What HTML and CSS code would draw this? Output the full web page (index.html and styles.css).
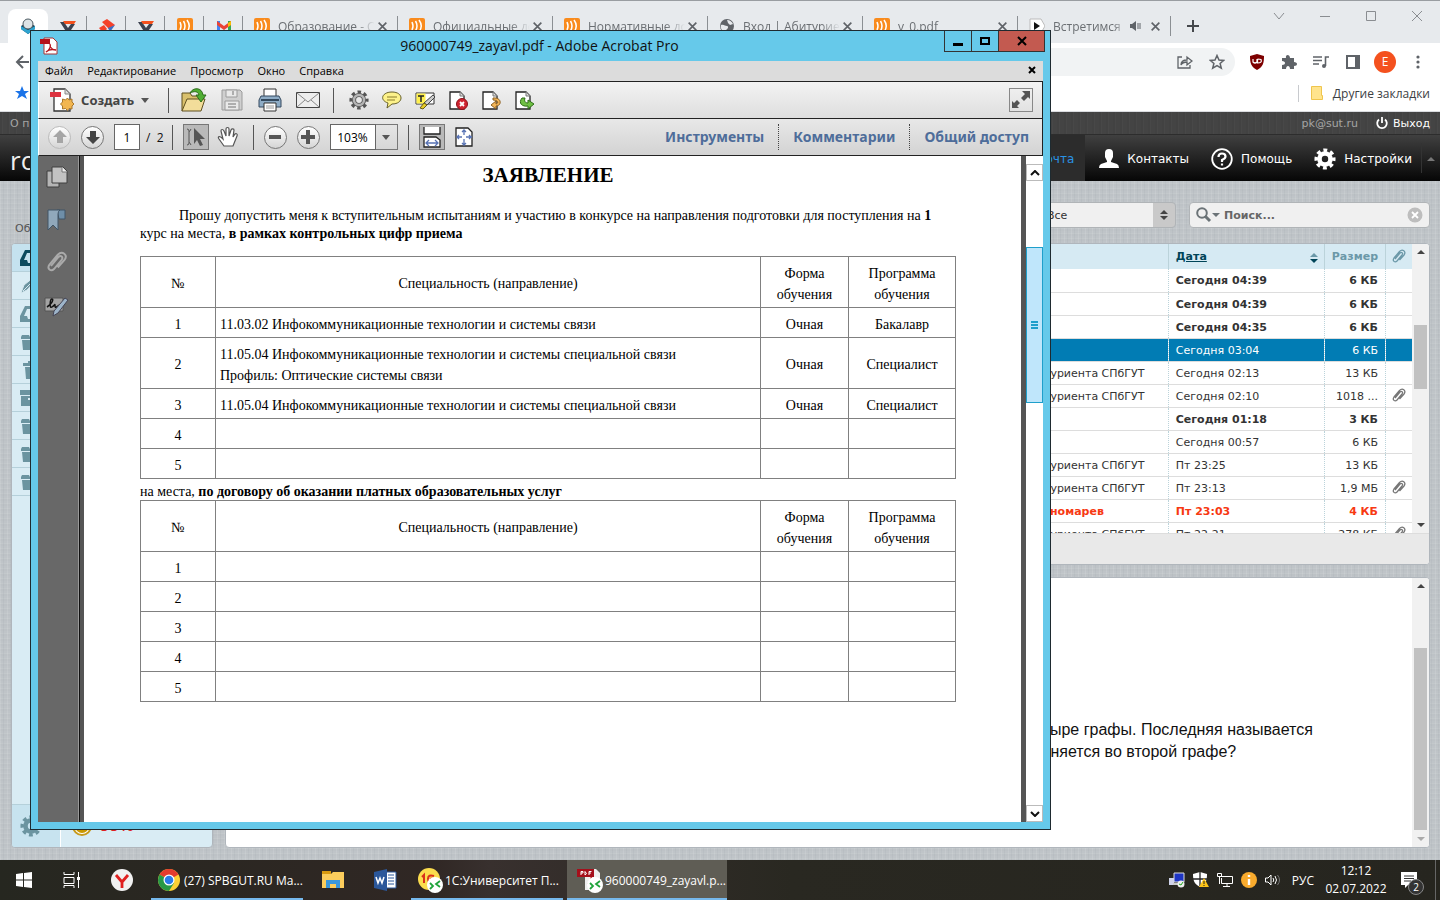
FILE: index.html
```
<!DOCTYPE html>
<html lang="ru">

<head>
    <meta charset="UTF-8">
    <meta name="viewport" content="width=device-width, initial-scale=1.0">
    <title>960000749_zayavl.pdf - Adobe Acrobat Pro</title>
    <link rel="stylesheet" href="styles.css">
</head>

<body>
    <!-- shared icons -->
    <svg class="sprite" aria-hidden="true">
        <symbol id="i-feed" viewBox="0 0 16 16">
            <rect width="16" height="16" rx="2" fill="#f98b1d" />
            <path d="M3 4q2 4 0 8M6.500 3q3 5 0 10M10 2q4.500 6 0 12" fill="none" stroke="#fff" stroke-width="1.500" />
        </symbol>
        <symbol id="i-vv" viewBox="0 0 16 16">
            <path d="M0 4h4l4 6 3-4h4l-6 9H7z" fill="#3c4250" />
            <path d="M3 3h13l-2 3H5z" fill="#f4511e" />
        </symbol>
        <symbol id="i-close" viewBox="0 0 10 10">
            <path d="M1.500 1.500l7 7M8.500 1.500l-7 7" stroke="currentColor" stroke-width="1.500" fill="none" />
        </symbol>
        <symbol id="i-gear" viewBox="0 0 24 24">
            <circle cx="12" cy="12" r="9.500" fill="none" stroke="currentColor" stroke-width="4" stroke-dasharray="4.100 3.360" stroke-dashoffset="2" />
            <circle cx="12" cy="12" r="6" fill="none" stroke="currentColor" stroke-width="5" />
        </symbol>
        <symbol id="i-clip" viewBox="0 0 16 16">
            <path d="M4 10l5-6c1.500-1.500 3.500 0 2 2l-5 6c-2 2-5 0-3-3l5.500-6.500c3-3 7 0 4.500 3.500L8.500 11" fill="none" stroke="currentColor" stroke-width="1.300" />
        </symbol>
        <symbol id="i-folder" viewBox="0 0 20 18">
            <path d="M1 2h7l1 2h10v2H0V4zM1 7h18l-1 10H2z" fill="currentColor" />
        </symbol>
        <symbol id="i-tray" viewBox="0 0 22 18">
            <path d="M5 1h12l5 10v6H0v-6zM7 4l-3 7h3l1 3h6l1-3h3l-3-7z" fill="currentColor" fill-rule="evenodd" />
        </symbol>
        <symbol id="i-sheet" viewBox="0 0 22 22">
            <path d="M2 2h10l4 4v13H2z" fill="#fff" stroke="#222" stroke-width="1.300" />
            <path d="M12 2v4h4" fill="#ddd" stroke="#777" />
        </symbol>
        <symbol id="i-remote" viewBox="0 0 16 16">
            <circle cx="8" cy="8" r="8" fill="#fff" />
            <path d="M3 6l3 3-3 3M13 4l-4 3 4 3" fill="none" stroke="#1fa33a" stroke-width="1.800" />
        </symbol>
    </svg>

    <div class="desktop">
        <header class="chrome">
            <div class="tabs">
                <div class="tab active">
                    <svg width="16" height="16" viewBox="0 0 16 16">
                        <path d="M1 8l7-4 7 4v3l-7 5-7-5z" fill="#1e3f52" />
                        <path d="M1 8l7 4 7-4v3l-7 5-7-5z" fill="#2ea3cf" />
                        <circle cx="8" cy="6" r="5" fill="#dde3e6" stroke="#4c5a62" />
                    </svg>
                </div>
                <div class="tab"><svg width="16" height="16"><use href="#i-vv" /></svg></div>
                <div class="tab">
                    <svg width="16" height="16" viewBox="0 0 16 16">
                        <path d="M3 4l5-3 8 6-6 4z" fill="#f4412a" />
                        <path d="M0 10l5-3 3 4-4 4z" fill="#f4412a" />
                        <path d="M9 10l7-3-5 7z" fill="#3d6fc4" />
                    </svg>
                </div>
                <div class="tab"><svg width="16" height="16"><use href="#i-vv" /></svg></div>
                <div class="tab"><svg width="16" height="16"><use href="#i-feed" /></svg></div>
                <div class="tab">
                    <svg width="16" height="16" viewBox="0 0 16 16">
                        <path d="M1 3h3v11H1z" fill="#4285f4" />
                        <path d="M12 3h3v11h-3z" fill="#34a853" />
                        <path d="M1 3l7 5 7-5v4l-7 5-7-5z" fill="#ea4335" />
                        <path d="M12 5l3-2v4l-3 2z" fill="#fbbc04" />
                    </svg>
                </div>
                <div class="tab wide"><svg width="16" height="16"><use href="#i-feed" /></svg><span>Образование - С</span><svg class="x" width="11" height="11"><use href="#i-close" /></svg></div>
                <div class="tab wide"><svg width="16" height="16"><use href="#i-feed" /></svg><span>Официальные до</span><svg class="x" width="11" height="11"><use href="#i-close" /></svg></div>
                <div class="tab wide"><svg width="16" height="16"><use href="#i-feed" /></svg><span>Нормативные до</span><svg class="x" width="11" height="11"><use href="#i-close" /></svg></div>
                <div class="tab wide">
                    <svg width="16" height="16" viewBox="0 0 16 16">
                        <circle cx="8" cy="8" r="7" fill="#5f6368" />
                        <path d="M2 7c3-1 4 1 6 1s1 3-1 4l-1 2c-3-1-5-4-4-7zM8 2c3 0 5 2 6 4l-3 1-2-2z" fill="#e7eaed" />
                    </svg>
                    <span>Вход | Абитурие</span><svg class="x" width="11" height="11"><use href="#i-close" /></svg>
                </div>
                <div class="tab wide"><svg width="16" height="16"><use href="#i-feed" /></svg><span>v_0.pdf</span><svg class="x" width="11" height="11"><use href="#i-close" /></svg></div>
                <div class="tab wide audible">
                    <svg width="16" height="16" viewBox="0 0 16 16">
                        <path d="M1 1h11l4 7-4 7H1z" fill="#fff" stroke="#bbb" />
                        <path d="M5 4l6 4-6 4z" fill="#111" />
                    </svg>
                    <span>Встретимся</span>
                    <svg class="x" width="12" height="12" viewBox="0 0 12 12">
                        <path d="M0 4h2l4-3v10L2 8H0z" fill="#5f6368" />
                        <path d="M8 3v6M10 3v6" stroke="#5f6368" />
                    </svg>
                    <svg class="x" width="11" height="11"><use href="#i-close" /></svg>
                </div>
                <svg class="plus" width="14" height="14" viewBox="0 0 14 14"><path d="M7 1v12M1 7h12" stroke="#45484c" stroke-width="2" /></svg>
                <div class="caption">
                    <svg width="12" height="12" viewBox="0 0 12 12"><path d="M1 3l5 6 5-6" /></svg>
                    <svg width="12" height="12" viewBox="0 0 12 12"><path d="M1 6.500h10" /></svg>
                    <svg width="12" height="12" viewBox="0 0 12 12"><path d="M1.500 1.500h9v9h-9z" /></svg>
                    <svg width="12" height="12" viewBox="0 0 12 12"><path d="M1 1l10 10M11 1L1 11" /></svg>
                </div>
            </div>
            <div class="address-row">
                <svg class="back" width="14" height="14" viewBox="0 0 14 14"><path d="M14 7H2M8 1L2 7l6 6" fill="none" stroke="#5f6368" stroke-width="2" /></svg>
                <div class="omnibox">
                    <svg width="16" height="16" viewBox="0 0 16 16"><path d="M5 3H1v11h12v-3M4 11c0-4 3-5 6-5V3l5 4-5 4V8c-3 0-5 1-6 3z" fill="none" stroke="#5f6368" stroke-width="1.300" /></svg>
                    <svg width="16" height="16" viewBox="0 0 16 16"><path d="M8 1.500l2 4.500 4.700.4-3.600 3 1.200 4.800L8 11.600l-4.300 2.600 1.200-4.800-3.600-3L6 6z" fill="none" stroke="#5f6368" stroke-width="1.500" /></svg>
                </div>
                <div class="extensions">
                    <svg width="16" height="16" viewBox="0 0 16 16">
                        <path d="M1 2l7-2 7 2c0 7-1 11-7 14C2 13 1 9 1 2z" fill="#7d0000" />
                        <path d="M4 5v3q2 2 4 0V5M8.500 5v4q5 0 3.500-3.500L8.500 5" fill="none" stroke="#fff" stroke-width="1.200" />
                    </svg>
                    <svg width="16" height="16" viewBox="0 0 16 16"><path d="M1 4h4c-1-4 4-4 4 0h4v4c4 0 4 4 0 4v3H9c0-4-4-4-4 0H1v-4c4 0 4-4 0-4z" fill="#5f6368" /></svg>
                    <svg width="16" height="16" viewBox="0 0 16 16"><path d="M0 3h9M0 6.500h9M0 10h6M12.500 12V3H16" fill="none" stroke="#5f6368" stroke-width="1.600" /><circle cx="11" cy="12" r="2" fill="#5f6368" /></svg>
                    <svg width="16" height="16" viewBox="0 0 16 16"><path d="M1 1h14v14H1zM3 3v10h7V3z" fill="#5f6368" fill-rule="evenodd" /></svg>
                </div>
                <span class="avatar">E</span>
                <svg class="dots" width="4" height="14" viewBox="0 0 4 14" fill="#5f6368"><circle cx="2" cy="2" r="1.600" /><circle cx="2" cy="7" r="1.600" /><circle cx="2" cy="12" r="1.600" /></svg>
            </div>
            <div class="bookmarks">
                <svg width="14" height="14" viewBox="0 0 14 14"><path d="M7 0l2 5h5l-4 3 2 5-5-3-5 3 2-5-4-3h5z" fill="#1a73e8" /></svg>
                <a class="other" href="#">
                    <svg width="12" height="14" viewBox="0 0 12 14"><path d="M.5.5h10v9h1v4H.5z" fill="#ffe48c" stroke="#efc54d" /></svg>
                    Другие закладки
                </a>
            </div>
        </header>

        <div class="webmail">
            <div class="topline">
                <a href="#">О программе</a>
                <span class="user">pk@sut.ru</span>
                <a class="logout" href="#">
                    <svg width="12" height="12" viewBox="0 0 12 12"><path d="M3 2.500a4.800 4.800 0 1 0 6 0M6 0v6" fill="none" stroke="#fff" stroke-width="1.800" /></svg>
                    Выход
                </a>
            </div>
            <nav class="taskmenu">
                <span class="logo">roundcube</span>
                <a class="selected" href="#">Почта</a>
                <a href="#">
                    <svg width="20" height="20" viewBox="0 0 20 20"><path d="M6 4q0-4 4-4t4 4v4l-2 4v1l6 2q2 1 2 4H0q0-3 2-4l6-2v-1L6 8z" fill="#fff" /></svg>
                    Контакты
                </a>
                <a href="#">
                    <svg width="22" height="22" viewBox="0 0 22 22"><circle cx="11" cy="11" r="9.800" fill="none" stroke="#fff" stroke-width="1.800" /><path d="M7.500 9q0-3.500 3.500-3.500t3.500 3Q14.500 10.500 11 12v2M11 15.500v2" fill="none" stroke="#fff" stroke-width="2.200" /></svg>
                    Помощь
                </a>
                <a href="#"><svg width="22" height="22"><use href="#i-gear" /></svg>Настройки</a>
                <span class="menu-caret"></span>
            </nav>
            <div class="mail">
                <aside class="mail-left">
                    <div class="mail-tools"><a href="#">Обновить</a></div>
                    <div class="panel folders">
                        <ul>
                            <li class="current"><svg width="22" height="18"><use href="#i-tray" /></svg></li>
                            <li><svg width="22" height="18" viewBox="0 0 22 18"><path d="M1 16l3-8 10-8 2 3-9 10zM3 14l9-9" fill="currentColor" stroke="#d7e9f1" /></svg></li>
                            <li><svg width="22" height="18"><use href="#i-tray" /></svg></li>
                            <li><svg width="22" height="18"><use href="#i-folder" /></svg></li>
                            <li><svg width="22" height="18" viewBox="0 0 22 18"><path d="M3 2h5V0h6v2h5v3H3zM5 6h12l-1 12H6z" fill="currentColor" /></svg></li>
                            <li><svg width="22" height="18" viewBox="0 0 22 18"><path d="M0 1h22v5H0zM1 7h20v10H1zM8 9v2h6V9z" fill="currentColor" fill-rule="evenodd" /></svg></li>
                            <li><svg width="22" height="18"><use href="#i-folder" /></svg></li>
                            <li><svg width="22" height="18"><use href="#i-folder" /></svg></li>
                            <li><svg width="22" height="18"><use href="#i-folder" /></svg></li>
                        </ul>
                        <div class="folder-footer">
                            <span class="folder-gear"><svg width="22" height="22"><use href="#i-gear" /></svg></span>
                            <svg width="20" height="20" viewBox="0 0 20 20"><circle cx="10" cy="10" r="9" fill="#fff" stroke="#c79a1b" stroke-width="2" /><circle cx="10" cy="10" r="7" fill="#c99700" /></svg>
                            <span class="quota">99%</span>
                        </div>
                    </div>
                </aside>
                <main class="mail-right">
                    <div class="mail-tools">
                        <div class="filter">
                            <select aria-label="Фильтр">
                                <option>Все</option>
                            </select>
                            <svg width="10" height="12" viewBox="0 0 10 12"><path d="M1 5l4-4 4 4zM1 7l4 4 4-4z" fill="#444" /></svg>
                        </div>
                        <div class="search">
                            <svg width="24" height="16" viewBox="0 0 24 16"><circle cx="6" cy="6" r="4.800" fill="none" stroke="#6b7377" stroke-width="2" /><path d="M9 9l5 5" stroke="#6b7377" stroke-width="3" /><path d="M16 6h8l-4 4z" fill="#6b7377" /></svg>
                            <input type="text" placeholder="Поиск..." aria-label="Поиск">
                            <svg width="16" height="16" viewBox="0 0 16 16"><circle cx="8" cy="8" r="7.500" fill="#bdbdbd" /><path d="M5 5l6 6M11 5l-6 6" stroke="#fff" stroke-width="1.800" /></svg>
                        </div>
                    </div>
                    <div class="panel list-panel">
                        <div class="list-scroll">
                            <table class="messages">
                                <thead>
                                    <tr>
                                        <th></th>
                                        <th class="from"></th>
                                        <th class="date"><a href="#">Дата</a><svg width="8" height="10" viewBox="0 0 8 10"><path d="M0 4l4-4 4 4z" fill="#6b98a8" /><path d="M0 6l4 4 4-4z" fill="#004458" /></svg></th>
                                        <th class="size">Размер</th>
                                        <th class="attach"><svg width="16" height="16"><use href="#i-clip" /></svg></th>
                                    </tr>
                                </thead>
                                <tbody>
                                    <tr class="unread"><td></td><td></td><td>Сегодня 04:39</td><td>6 КБ</td><td></td></tr>
                                    <tr class="unread"><td></td><td></td><td>Сегодня 04:39</td><td>6 КБ</td><td></td></tr>
                                    <tr class="unread"><td></td><td></td><td>Сегодня 04:35</td><td>6 КБ</td><td></td></tr>
                                    <tr class="marked"><td></td><td></td><td>Сегодня 03:04</td><td>6 КБ</td><td></td></tr>
                                    <tr><td></td><td>абитуриента СПбГУТ</td><td>Сегодня 02:13</td><td>13 КБ</td><td></td></tr>
                                    <tr><td></td><td>абитуриента СПбГУТ</td><td>Сегодня 02:10</td><td>1018 ...</td><td><svg width="16" height="16"><use href="#i-clip" /></svg></td></tr>
                                    <tr class="unread"><td></td><td></td><td>Сегодня 01:18</td><td>3 КБ</td><td></td></tr>
                                    <tr><td></td><td></td><td>Сегодня 00:57</td><td>6 КБ</td><td></td></tr>
                                    <tr><td></td><td>абитуриента СПбГУТ</td><td>Пт 23:25</td><td>13 КБ</td><td></td></tr>
                                    <tr><td></td><td>абитуриента СПбГУТ</td><td>Пт 23:13</td><td>1,9 МБ</td><td><svg width="16" height="16"><use href="#i-clip" /></svg></td></tr>
                                    <tr class="unread flagged"><td></td><td>г.Пономарев</td><td>Пт 23:03</td><td>4 КБ</td><td></td></tr>
                                    <tr><td></td><td>абитуриента СПбГУТ</td><td>Пт 22:21</td><td>278 КБ</td><td><svg width="16" height="16"><use href="#i-clip" /></svg></td></tr>
                                </tbody>
                            </table>
                            <div class="scroll"><i class="up"></i><i class="thumb list-thumb"></i><i class="down"></i></div>
                        </div>
                        <div class="list-footer"></div>
                    </div>
                    <div class="panel preview">
                        <p>из них четыре графы. Последняя называется<br>чем заполняется во второй графе?</p>
                        <div class="scroll"><i class="up"></i><i class="thumb preview-thumb"></i><i class="down off"></i></div>
                    </div>
                </main>
            </div>
        </div>

        <!-- Acrobat window -->
        <section class="acrobat">
            <div class="titlebar">
                <svg width="18" height="18" viewBox="0 0 18 18">
                    <path d="M4 1h9l4 4v12H4z" fill="#fff" stroke="#a33" />
                    <path d="M0 2h10v5H0z" fill="#b5121b" />
                    <path d="M6 15c4-2 5-6 4-8 0 3 2 6 6 6-4-1-8 0-10 2z" fill="none" stroke="#b5121b" stroke-width="1.300" />
                </svg>
                <h1>960000749_zayavl.pdf - Adobe Acrobat Pro</h1>
                <div class="window-buttons">
                    <button type="button" aria-label="Свернуть"><svg width="12" height="12" viewBox="0 0 12 12"><path d="M1 8h10v3H1z" /></svg></button>
                    <button type="button" aria-label="Развернуть"><svg width="12" height="12" viewBox="0 0 12 12"><path d="M1 2h10v8H1zM3 4v4h6V4z" fill-rule="evenodd" /></svg></button>
                    <button type="button" class="close" aria-label="Закрыть"><svg width="12" height="12" viewBox="0 0 12 12"><path d="M2 2l8 8M10 2l-8 8" stroke="#000" stroke-width="2" /></svg></button>
                </div>
            </div>
            <nav class="menubar">
                <a href="#">Файл</a>
                <a href="#">Редактирование</a>
                <a href="#">Просмотр</a>
                <a href="#">Окно</a>
                <a href="#">Справка</a>
                <button type="button" aria-label="Закрыть документ"><svg width="8" height="8" viewBox="0 0 8 8"><path d="M1 1l6 6M7 1L1 7" stroke="#000" stroke-width="2" /></svg></button>
            </nav>
            <div class="toolbar">
                <button type="button" class="create">
                    <svg width="24" height="24" viewBox="0 0 24 24">
                        <path d="M4 1h11l5 5v17H4z" fill="#fff" stroke="#333" stroke-width="1.300" />
                        <path d="M15 1v5h5" fill="#ddd" stroke="#888" />
                        <path d="M0 4h11v5H0z" fill="#dd3340" />
                        <path d="M17.500 10l1.500 2 3-1v3l2 2-2 2v3l-3-.5-1.500 2-2-2-3 .5v-3l-2-2 2-2v-3l3 1z" fill="#f2b650" stroke="#a9772b" />
                    </svg>
                    Создать <i class="caret"></i>
                </button>
                <i class="sep"></i>
                <button type="button" aria-label="Открыть">
                    <svg width="26" height="26" viewBox="0 0 26 26">
                        <path d="M1 24V6h8l2 3h10v4" fill="#d9c06c" stroke="#5f4f1f" />
                        <path d="M1 24l5-12h18l-4 12z" fill="#f2dd9a" stroke="#5f4f1f" />
                        <path d="M9 6c3-6 12-6 13 2h3l-5 7-5-7h3c-1-4-5-4-9-2z" fill="#4fae32" stroke="#2c6b1b" />
                    </svg>
                </button>
                <button type="button" aria-label="Сохранить">
                    <svg width="22" height="22" viewBox="0 0 22 22">
                        <path d="M1 1h18l2 2v18H1z" fill="#cfcfcf" stroke="#9b9b9b" />
                        <path d="M5 1h11v7H5zM4 12h14v9H4z" fill="#e9e9e9" stroke="#9b9b9b" />
                        <path d="M7 15h8M7 18h8M12 2v4" stroke="#9b9b9b" stroke-width="1.500" />
                    </svg>
                </button>
                <button type="button" aria-label="Печать">
                    <svg width="24" height="24" viewBox="0 0 24 24">
                        <path d="M6 1h12v9H6z" fill="#fff" stroke="#333" />
                        <path d="M3 8h18l2 4v7H1v-7z" fill="#8eacc6" stroke="#34495e" />
                        <path d="M3 12h18" stroke="#34495e" stroke-width="2" />
                        <path d="M6 15h12v8H6z" fill="#fff" stroke="#333" />
                        <path d="M8 18h8M8 20h8" stroke="#999" />
                    </svg>
                </button>
                <button type="button" aria-label="Отправить">
                    <svg width="24" height="24" viewBox="0 0 24 24">
                        <path d="M.5 4.500h23v15H.5z" fill="#eee" stroke="#444" />
                        <path d="M1 5l11 9 11-9M1 19l8-7M23 19l-8-7" fill="none" stroke="#888" />
                    </svg>
                </button>
                <i class="sep"></i>
                <div class="quick">
                    <button type="button" aria-label="Настройка">
                        <svg width="20" height="20" viewBox="0 0 24 24" color="#555"><use href="#i-gear" /><circle cx="12" cy="12" r="6" fill="none" stroke="#b5b5b5" stroke-width="3" /></svg>
                    </button>
                    <button type="button" aria-label="Комментарий">
                        <svg width="20" height="20" viewBox="0 0 20 20"><path d="M10 2c12 0 12 12 0 12l-5 4 1-5C-3 10 0 2 10 2z" fill="#fdf28a" stroke="#66602a" /><path d="M5 7h10M5 10h8" stroke="#8a7c2d" /></svg>
                    </button>
                    <button type="button" aria-label="Выделить текст">
                        <svg width="20" height="20" viewBox="0 0 20 20"><path d="M1 3h18v11H1z" fill="#fff" stroke="#333" /><path d="M1.500 3.500h9v10h-9z" fill="#fff04d" /><path d="M3 6h6M6 6v6" stroke="#222" stroke-width="1.500" /><path d="M18 5l2 2-8 8-3-2z" fill="#ccc" stroke="#444" /><path d="M9 13l3 2-4 4-3-1z" fill="#e6cb26" stroke="#665a14" /></svg>
                    </button>
                    <button type="button" aria-label="Удалить страницы">
                        <svg width="20" height="20" viewBox="0 0 20 20"><use href="#i-sheet" width="22" height="22" /><circle cx="14" cy="14" r="5.500" fill="#cf2430" stroke="#8e1019" /><path d="M12 12l4 4M16 12l-4 4" stroke="#fff" stroke-width="1.800" /></svg>
                    </button>
                    <button type="button" aria-label="Повернуть страницы">
                        <svg width="20" height="20" viewBox="0 0 20 20"><use href="#i-sheet" width="22" height="22" /><path d="M12 8c9-1 9 8 3 8v3l-5-4 5-4v3c3-1 2-4-3-4z" fill="#f3b557" stroke="#8d6020" /></svg>
                    </button>
                    <button type="button" aria-label="Извлечь страницы">
                        <svg width="20" height="20" viewBox="0 0 20 20"><use href="#i-sheet" width="22" height="22" /><path d="M8 8c-4 5 0 9 6 8v3l6-5-6-4v3c-3 0-4-2-3-5z" fill="#6fc043" stroke="#2f6d18" /></svg>
                    </button>
                </div>
                <button type="button" class="expand" aria-label="Режим чтения">
                    <svg width="20" height="20" viewBox="0 0 20 20"><path d="M11 1h8v8l-2-2-4 4-3-3 4-4zM1 11l2 2 3-3 3 3-3 3 2 2H1z" fill="#555" /></svg>
                </button>
            </div>
            <div class="toolbar second">
                <button type="button" class="round off" aria-label="Предыдущая страница"><svg width="24" height="24" viewBox="0 0 24 24"><path d="M12 5l7 7h-4v6H9v-6H5z" fill="#a5a5a5" /></svg></button>
                <button type="button" class="round" aria-label="Следующая страница"><svg width="24" height="24" viewBox="0 0 24 24"><path d="M12 19l-7-7h4V6h6v6h4z" fill="#444" /></svg></button>
                <input class="page-number" type="text" value="1" aria-label="Страница">
                <span class="page-total">/&nbsp; 2</span>
                <i class="sep"></i>
                <button type="button" class="pressed" aria-label="Выделение">
                    <svg width="22" height="22" viewBox="0 0 22 22"><path d="M2 3q2 0 2 2t2-2M4 5v12M2 19q2 0 2-2t2 2" fill="none" stroke="#555" /><path d="M9 2l11 11h-5l3 6-3 1-3-6-3 4z" fill="#555" /></svg>
                </button>
                <button type="button" aria-label="Рука">
                    <svg width="22" height="22" viewBox="0 0 22 22"><path d="M7 20l-5-7c-2-3 1-3 3-1l1 1-2-8c0-2 2-2 3 0l2 5V3c0-2 3-2 3 0v7l2-6c1-2 3-1 3 0l-1 7 2-3c1-1 3 0 2 2l-4 10z" fill="#fff" stroke="#555" stroke-width="1.200" /></svg>
                </button>
                <i class="sep"></i>
                <button type="button" class="round" aria-label="Уменьшить"><svg width="24" height="24" viewBox="0 0 24 24"><path d="M6 10h12v4H6z" fill="#555" /></svg></button>
                <button type="button" class="round" aria-label="Увеличить"><svg width="24" height="24" viewBox="0 0 24 24"><path d="M10 5h4v5h5v4h-5v5h-4v-5H5v-4h5z" fill="#555" /></svg></button>
                <div class="zoom">
                    <input type="text" value="103%" aria-label="Масштаб">
                    <button type="button" aria-label="Выбрать масштаб"><i class="caret"></i></button>
                </div>
                <i class="sep"></i>
                <button type="button" class="pressed" aria-label="По ширине">
                    <svg width="20" height="22" viewBox="0 0 20 22"><path d="M2 1v7h16V1M2 21V11h12l4 3v7z" fill="#fff" stroke="#222" stroke-width="1.300" /><path d="M4 17h12M7 14l-3 3 3 3M13 14l3 3-3 3" fill="none" stroke="#5873b4" stroke-width="1.300" /></svg>
                </button>
                <button type="button" aria-label="Целая страница">
                    <svg width="20" height="22" viewBox="0 0 20 22"><path d="M2 2h12l4 4v14H2z" fill="#fff" stroke="#222" stroke-width="1.300" /><path d="M10 4v5M10 13v6M3 11h5M12 11h6M8 6l2-2 2 2M8 17l2 2 2-2M5 9l-2 2 2 2M15 9l2 2-2 2" fill="none" stroke="#5873b4" stroke-width="1.300" /></svg>
                </button>
                <div class="panes">
                    <a href="#">Инструменты</a>
                    <a href="#">Комментарии</a>
                    <a href="#">Общий доступ</a>
                </div>
            </div>
            <div class="workspace">
                <aside class="rail">
                    <svg width="24" height="24" viewBox="0 0 24 24"><path d="M2 6h12v16H2z" fill="#b5b5b5" stroke="#3f3f3f" /><path d="M7 2h11l4 4v12H7z" fill="#c2c2c2" stroke="#3f3f3f" /><path d="M17 2v5h5" fill="#eee" stroke="#777" /></svg>
                    <svg width="24" height="24" viewBox="0 0 24 24"><path d="M12 2h8v9h-6z" fill="#6e8ea8" stroke="#405567" /><path d="M3 2h12q-2 1-2 4v16l-5-5-5 5z" fill="#90a8bb" stroke="#405567" /></svg>
                    <svg width="24" height="24" viewBox="0 0 16 16" color="#aaa"><use href="#i-clip" /></svg>
                    <svg width="26" height="24" viewBox="0 0 26 24"><path d="M1 4h18v13H1z" fill="#a3a3a3" stroke="#555" /><path d="M3 13c5-3 7-8 5-8s-3 10 0 8 3-4 3-1 3 0 4-1" fill="none" stroke="#111" stroke-width="1.500" /><path d="M21 4l3 2-10 13-5 3 1-5z" fill="#9db4c9" stroke="#445" /></svg>
                </aside>
                <article class="paper">
                    <h2>ЗАЯВЛЕНИЕ</h2>
                    <p class="intro">Прошу допустить меня к вступительным испытаниям и участию в конкурсе на направления подготовки для поступления на <b>1</b> курс на места, <b>в рамках контрольных цифр приема</b></p>
                    <table class="choices">
                        <thead>
                            <tr><th class="num">№</th><th>Специальность (направление)</th><th class="form">Форма<br>обучения</th><th class="program">Программа<br>обучения</th></tr>
                        </thead>
                        <tbody>
                            <tr><td>1</td><td>11.03.02 Инфокоммуникационные технологии и системы связи</td><td>Очная</td><td>Бакалавр</td></tr>
                            <tr class="double"><td>2</td><td>11.05.04 Инфокоммуникационные технологии и системы специальной связи<br>Профиль: Оптические системы связи</td><td>Очная</td><td>Специалист</td></tr>
                            <tr><td>3</td><td>11.05.04 Инфокоммуникационные технологии и системы специальной связи</td><td>Очная</td><td>Специалист</td></tr>
                            <tr><td>4</td><td></td><td></td><td></td></tr>
                            <tr><td>5</td><td></td><td></td><td></td></tr>
                        </tbody>
                    </table>
                    <p class="between">на места, <b>по договору об оказании платных образовательных услуг</b></p>
                    <table class="choices">
                        <thead>
                            <tr><th class="num">№</th><th>Специальность (направление)</th><th class="form">Форма<br>обучения</th><th class="program">Программа<br>обучения</th></tr>
                        </thead>
                        <tbody>
                            <tr><td>1</td><td></td><td></td><td></td></tr>
                            <tr><td>2</td><td></td><td></td><td></td></tr>
                            <tr><td>3</td><td></td><td></td><td></td></tr>
                            <tr><td>4</td><td></td><td></td><td></td></tr>
                            <tr><td>5</td><td></td><td></td><td></td></tr>
                        </tbody>
                    </table>
                </article>
                <div class="doc-scroll">
                    <span class="arrow"><svg width="10" height="6" viewBox="0 0 10 6"><path d="M1 5l4-4 4 4" /></svg></span>
                    <span class="doc-thumb"></span>
                    <span class="arrow"><svg width="10" height="6" viewBox="0 0 10 6"><path d="M1 1l4 4 4-4" /></svg></span>
                </div>
            </div>
        </section>

        <footer class="taskbar">
            <button type="button" class="task start" aria-label="Пуск"><svg width="16" height="16" viewBox="0 0 16 16"><path d="M0 2l7-1v6.500H0zM8 1l8-1v7.500H8zM0 8.500h7V15l-7-1zM8 8.500h8V16l-8-1z" fill="#fff" /></svg></button>
            <button type="button" class="task view" aria-label="Представление задач"><svg width="18" height="16" viewBox="0 0 18 16"><path d="M1 0v2.500h10V0M1 5.500h10v6H1zM1 16v-2.500h10V16M15.500 0v16" fill="none" stroke="#fff" /><path d="M14 5h3v3h-3z" fill="#fff" /></svg></button>
            <button type="button" class="task pin" aria-label="Яндекс"><svg width="22" height="22" viewBox="0 0 22 22"><circle cx="11" cy="11" r="11" fill="#f1f1f1" /><path d="M5 6l6 7 6-7M11 12v7" fill="none" stroke="#e02020" stroke-width="2.800" /></svg></button>
            <button type="button" class="task open">
                <svg width="22" height="22" viewBox="0 0 22 22">
                    <circle cx="11" cy="11" r="11" fill="#fdd034" />
                    <path d="M11 11L1.500 5.500A11 11 0 0 1 20.500 5.500z" fill="#e33b2e" />
                    <path d="M11 11L1.500 5.500A11 11 0 0 0 11 22l5-8z" fill="#279847" />
                    <circle cx="11" cy="11" r="5.500" fill="#fff" /><circle cx="11" cy="11" r="4.300" fill="#2a7bea" />
                </svg>
                <span>(27) SPBGUT.RU Ma...</span>
            </button>
            <button type="button" class="task pin" aria-label="Проводник"><svg width="22" height="20" viewBox="0 0 22 20"><path d="M0 1h9v4H0z" fill="#d99a10" /><path d="M0 4h9l2-2h11v16H0z" fill="#fccd5c" /><path d="M4 18v-8h14v8h-4v-4H8v4z" fill="#3a97db" /></svg></button>
            <button type="button" class="task word" aria-label="Word">
                <svg width="24" height="22" viewBox="0 0 24 22"><path d="M12 3h11v16H12z" fill="#fff" stroke="#2b579a" /><path d="M15 6h6M15 9h6M15 12h6M15 15h6" stroke="#2b579a" /><path d="M1 3l13-3v22L1 19z" fill="#2b579a" /><path d="M3 8l2 6 2-5 2 5 2-6" fill="none" stroke="#fff" stroke-width="1.500" /></svg>
            </button>
            <button type="button" class="task open remote">
                <svg width="26" height="26" viewBox="0 0 26 26"><circle cx="12" cy="12" r="11" fill="#fbdc4d" /><path d="M5 10l2-2v8M17 9q-6-2-6 3t7 3M17 12q-4-1-3 0" fill="none" stroke="#d9301c" stroke-width="2" /><use href="#i-remote" x="10" y="10" width="16" height="16" /></svg>
                <span>1С:Университет П...</span>
            </button>
            <button type="button" class="task open current">
                <svg width="26" height="26" viewBox="0 0 26 26"><path d="M8 2h11l4 4v17H8z" fill="#eee" /><path d="M11 17c4-4 4-6 3-8 0 4 3 5 6 5" fill="none" stroke="#b11" stroke-width="1.500" /><path d="M0 2h17v8H0z" fill="#a50f1b" /><path d="M4 8V4.500h2V6H4M8 4.500V8q3-1 0-3.500M12 8V4.500h2.500M12 6h2" fill="none" stroke="#fff" /><use href="#i-remote" x="10" y="10" width="16" height="16" /></svg>
                <span>960000749_zayavl.p...</span>
            </button>
            <div class="tray">
                <svg width="16" height="16" viewBox="0 0 16 16"><path d="M5 1h10v9H5z" fill="#1e35c4" stroke="#ddd" /><path d="M0 6h5v7H0z" fill="#cfd3ea" /><path d="M4 11h8v2H4z" fill="#ccc" /><circle cx="12" cy="12" r="3.500" fill="#eee" /><path d="M10 12l2 1 2-3" stroke="#2a2" fill="none" /></svg>
                <svg width="16" height="16" viewBox="0 0 16 16"><path d="M0 2l7-2 7 2c0 6-1 10-7 13C1 12 0 8 0 2z" fill="#fff" /><path d="M7 0v14M0 7h14" stroke="#222" stroke-width="1.300" /><path d="M11 6l5 9H6z" fill="#fcc419" /><path d="M11 9v3M11 13v1" stroke="#222" /></svg>
                <svg width="16" height="16" viewBox="0 0 16 16" fill="none" stroke="#fff"><path d="M4 4.500h11.500v7H4.500V6M10 12v2M6 14.500h7M.5 1.500h4v3h-4zM2.500 5v7" /></svg>
                <svg width="16" height="16" viewBox="0 0 16 16"><circle cx="8" cy="8" r="8" fill="#f9ab2d" /><path d="M8 7v6M8 3v2" stroke="#fff" stroke-width="2.400" /></svg>
                <svg width="16" height="16" viewBox="0 0 16 16" fill="none" stroke="#fff"><path d="M.5 6H3l3-3v10L3 10H.500zM8 6q1.500 2 0 4M10 4q3 4 0 8" /><path d="M12.500 3q4 5 0 10" stroke="#777" /></svg>
                <span class="lang">РУС</span>
                <div class="clock">12:12<br>02.07.2022</div>
                <div class="notice">
                    <svg width="16" height="16" viewBox="0 0 16 16"><path d="M0 0h16v13H7l-3 3v-3H0z" fill="#fff" /><path d="M3 4h10M3 6.500h10M3 9h7" stroke="#333" /></svg>
                    <span>2</span>
                </div>
            </div>
        </footer>
    </div>
</body>

</html>
```
FILE: styles.css
```
* {
    margin: 0;
    padding: 0;
    box-sizing: border-box;
}

body {
    font-family: "Open Sans", "Noto Sans", sans-serif;
    font-size: 12px;
    color: #333;
}

a {
    color: inherit;
    text-decoration: none;
}

button {
    font: inherit;
    color: inherit;
    border: none;
    background: none;
    display: flex;
    align-items: center;
    justify-content: center;
}

svg {
    flex: none;
    display: block;
}

.sprite {
    position: absolute;
    width: 0;
    height: 0;
}

.desktop {
    position: relative;
    display: flex;
    flex-direction: column;
    height: 100vh;
    overflow: hidden;
}

/* Browser */

.chrome {
    background: #fff;
    border-top: 1px solid #999da1;
    border-bottom: 1px solid #dadce0;
}

.tabs {
    display: flex;
    align-items: center;
    height: 42px;
    padding: 8px 0 0 8px;
    background: #e7eaed;
    color: #5f6368;
}

.tab {
    position: relative;
    display: flex;
    align-items: center;
    justify-content: center;
    width: 39px;
    height: 34px;
}

.tab::after {
    content: "";
    position: absolute;
    right: 0;
    top: 7px;
    width: 1px;
    height: 20px;
    background: #8b8f93;
}

.tab.active {
    width: 40px;
    background: #fff;
    border-radius: 8px 8px 0 0;
}

.tab.active::after {
    display: none;
}

.tab.wide {
    width: 155px;
    justify-content: flex-start;
    gap: 8px;
    padding: 0 10px 0 11px;
}

.tab span {
    flex: 1;
    min-width: 0;
    margin-right: -6px;
    white-space: nowrap;
    color: #6b6f73;
    -webkit-mask-image: linear-gradient(90deg, #000 80%, transparent);
    mask-image: linear-gradient(90deg, #000 80%, transparent);
}

.tab.audible {
    width: 153px;
}

.plus {
    margin-left: 15px;
}

.caption {
    display: flex;
    gap: 34px;
    margin: 0 17px 20px auto;
    fill: none;
    stroke: #8a8d91;
}

.address-row {
    display: flex;
    align-items: center;
    height: 38px;
    padding: 0 20px 0 15px;
}

.omnibox {
    flex: 1;
    display: flex;
    align-items: center;
    justify-content: flex-end;
    gap: 16px;
    height: 28px;
    margin: 0 14px 0 80px;
    padding-right: 10px;
    border-radius: 14px;
    background: #f1f3f4;
}

.extensions {
    display: flex;
    gap: 16px;
}

.avatar {
    width: 22px;
    margin: 0 20px 0 13px;
    border-radius: 50%;
    background: #f4511e;
    color: #fff;
    line-height: 22px;
    text-align: center;
}

.bookmarks {
    display: flex;
    align-items: center;
    justify-content: space-between;
    height: 30px;
    padding: 0 10px 6px 15px;
}

.other {
    display: flex;
    align-items: center;
    gap: 10px;
    padding-left: 12px;
    border-left: 1px solid #c8cace;
    color: #3c4043;
}

/* Webmail */

.webmail {
    flex: 1;
    display: flex;
    flex-direction: column;
    min-height: 0;
    font-family: "DejaVu Sans", Verdana, sans-serif;
    font-size: 11px;
}

.topline {
    display: flex;
    align-items: center;
    height: 23px;
    padding: 0 10px;
    background: repeating-linear-gradient(90deg, #424242 0 2px, #484848 2px 3px, #444 3px 7px);
    border-bottom: 1px solid #2d2d2d;
    color: #a5a5a5;
}

.user {
    margin-left: auto;
}

.logout {
    display: flex;
    gap: 5px;
    align-items: center;
    margin-left: 18px;
    color: #fff;
}

.taskmenu {
    display: flex;
    align-items: center;
    height: 46px;
    padding-left: 10px;
    background: linear-gradient(#404040, #060606);
    color: #fff;
    font-size: 12px;
}

.logo {
    margin-right: auto;
    padding-top: 3px;
    font-family: "Open Sans", sans-serif;
    font-size: 26px;
    color: #eee;
}

.taskmenu a {
    display: flex;
    align-items: center;
    gap: 8px;
    height: 46px;
    padding: 1px 8px 0 14px;
}

.taskmenu .selected {
    padding: 1px 11px 0;
    background: #2c2c2c;
    color: #2a93e6;
}

.menu-caret {
    padding: 0 5px;
    margin-left: 1px;
    border-left: 1px solid #333;
    line-height: 30px;
}

.menu-caret::before {
    content: "";
    display: inline-block;
    border: 4px solid transparent;
    border-top: none;
    border-bottom-color: #777;
    vertical-align: middle;
}

.mail {
    flex: 1;
    display: grid;
    grid-template-columns: 202px 1fr;
    gap: 12px;
    min-height: 0;
    padding: 0 10px 12px 11px;
    background:
        repeating-linear-gradient(90deg, rgba(255, 255, 255, .10) 0 1px, transparent 1px 3px, rgba(120, 130, 140, .08) 3px 4px, transparent 4px 7px),
        repeating-linear-gradient(#bfc4c8 0 2px, #c3c8cb 2px 3px, #bdc2c6 3px 5px);
}

.mail-left,
.mail-right {
    display: flex;
    flex-direction: column;
    min-height: 0;
    min-width: 0;
}

.mail-tools {
    display: flex;
    justify-content: flex-end;
    gap: 13px;
    height: 62px;
    padding-top: 21px;
}

.mail-left .mail-tools {
    justify-content: flex-start;
    align-items: flex-end;
    padding: 0 0 8px 4px;
    color: #555;
}

.panel {
    border: 1px solid #b0b6bc;
    border-radius: 4px;
    overflow: hidden;
    background: #fff;
}

.folders {
    flex: 1;
    display: flex;
    flex-direction: column;
    background: #d9ecf4;
    color: #6b94a0;
}

.folders ul {
    flex: 1;
    list-style: none;
}

.folders li {
    display: flex;
    align-items: center;
    height: 28px;
    padding-left: 8px;
    border-bottom: 1px solid #b5d0da;
}

.folders .current {
    background: #c5e2ef;
    color: #0b4a5e;
}

.folder-footer {
    display: flex;
    align-items: center;
    height: 43px;
    border-top: 1px solid #b5d0da;
}

.folder-gear {
    width: 49px;
    height: 42px;
    margin-right: 11px;
    padding: 10px 8px;
    background: #c7e3ef;
    border-right: 1px solid #fff;
}

.quota {
    margin-left: 8px;
    color: #e02020;
    font-size: 14px;
    font-weight: bold;
}

.filter {
    position: relative;
    width: 136px;
    height: 26px;
}

.filter select {
    width: 100%;
    height: 26px;
    padding-left: 6px;
    appearance: none;
    border: 1px solid #b0b4b7;
    border-radius: 4px;
    background: linear-gradient(90deg, #f0f0f0 112px, #c9c9c9 112px);
    font: inherit;
    color: #333;
}

.filter svg {
    position: absolute;
    right: 7px;
    top: 7px;
}

.search {
    display: flex;
    align-items: center;
    gap: 4px;
    width: 241px;
    height: 26px;
    padding: 0 6px;
    border: 1px solid #b0b4b7;
    border-radius: 4px;
    background: #f0f0f0;
}

.search input {
    flex: 1;
    min-width: 0;
    border: none;
    background: none;
    font: bold 11px "DejaVu Sans", sans-serif;
}

.search input::placeholder {
    color: #666;
}

.list-panel {
    flex: none;
    height: 322px;
    margin-bottom: 12px;
}

.list-scroll {
    display: flex;
    height: 289px;
    overflow: hidden;
}

.messages {
    flex: 1;
    align-self: flex-start;
    table-layout: fixed;
    border-collapse: collapse;
}

.messages th {
    height: 25px;
    padding: 0 7px;
    background: #d6eaf3;
    color: #6b98a8;
    text-align: left;
    border-left: 1px solid #bbd3da;
}

.messages td {
    height: 23px;
    padding: 1px 7px 0;
    overflow: hidden;
    white-space: nowrap;
    text-overflow: ellipsis;
    border-bottom: 1px solid #ddd;
    border-left: 1px dotted #bbd3da;
}

.messages td:nth-child(-n+2),
.messages th:nth-child(-n+2) {
    border-left: none;
}

.messages .from {
    width: 152px;
}

.messages .date {
    width: 156px;
    color: #004458;
}

.date a {
    text-decoration: underline;
}

.date svg {
    float: right;
    margin: 3px -1px 0 0;
}

.messages .size {
    width: 61px;
}

.messages td:nth-child(4),
.messages .size {
    text-align: right;
}

.messages .attach {
    width: 26px;
}

.messages td:last-child,
.messages .attach {
    padding: 0 5px;
}

.messages td svg {
    color: #777;
}

.unread {
    font-weight: bold;
}

.messages .marked {
    background: #017cb4;
    color: #fff;
}

.messages .flagged {
    color: #f73912;
}

.scroll {
    flex: none;
    display: flex;
    flex-direction: column;
    align-items: center;
    width: 17px;
    padding: 6px 0;
    background: #f1f1f1;
}

.scroll .up,
.scroll .down {
    border: 4px solid transparent;
    border-top: none;
    border-bottom-color: #444;
}

.scroll .down {
    margin-top: auto;
    border: 4px solid transparent;
    border-bottom: none;
    border-top-color: #444;
}

.scroll .off {
    border-top-color: #aaa;
}

.thumb {
    width: 13px;
    background: #c1c1c1;
}

.list-thumb {
    height: 64px;
    margin-top: 71px;
}

.preview-thumb {
    flex: 1;
    margin: 60px 0 7px;
}

.list-footer {
    height: 31px;
    border-top: 1px solid #ddd;
    background: #e9e9e9;
}

.preview {
    flex: 1;
    display: flex;
    justify-content: flex-end;
}

.preview p {
    width: 437px;
    padding-top: 141px;
    font: 16px/22px "Liberation Sans", Arial, sans-serif;
    color: #111;
}

/* Acrobat */

.acrobat {
    position: absolute;
    top: 30px;
    right: 389px;
    bottom: 70px;
    left: 30px;
    display: flex;
    flex-direction: column;
    padding: 0 7px 7px;
    border: 1px solid #1e2a30;
    background: #66c9ea;
}

.titlebar {
    display: flex;
    align-items: center;
    height: 30px;
    padding-left: 2px;
    color: #111;
}

.titlebar h1 {
    flex: 1;
    padding: 0 0 2px 77px;
    font-size: 14px;
    font-weight: normal;
    text-align: center;
}

.window-buttons {
    align-self: flex-start;
    display: flex;
    margin-right: -2px;
}

.window-buttons button {
    width: 27px;
    height: 21px;
    border: 1px solid #333;
    border-top: none;
    border-right: none;
}

.window-buttons .close {
    width: 47px;
    border-right: 1px solid #333;
    background: #c35a50;
}

.menubar {
    display: flex;
    align-items: center;
    gap: 14px;
    height: 20px;
    padding: 0 7px 2px;
    background: #dcdcdc;
    color: #000;
    font-size: 11px;
}

.menubar button {
    margin-left: auto;
}

.toolbar {
    display: flex;
    align-items: center;
    height: 37px;
    padding: 0 9px;
    border: 1px solid #222;
    border-bottom: none;
    border-left-color: #fff;
    background: linear-gradient(#f3f3f3, #dedede);
}

.toolbar > button {
    width: 26px;
    margin-right: 12px;
}

.toolbar .create {
    width: auto;
    margin-right: 0;
    padding-left: 2px;
    gap: 7px;
    font: bold 13px "Noto Sans", sans-serif;
    color: #444;
}

.caret {
    display: inline-block;
    border: 4px solid transparent;
    border-top: 5px solid #555;
    border-bottom: none;
}

.sep {
    flex: none;
    width: 1px;
    height: 25px;
    margin-right: 12px;
    background: #555;
}

.toolbar .create + .sep {
    margin-left: 19px;
}

.quick {
    display: flex;
    gap: 13px;
    margin-left: 3px;
}

.toolbar .expand {
    width: 24px;
    height: 24px;
    margin: 0 0 0 auto;
    border: 1px solid #888;
}

.second {
    height: 38px;
    border-bottom: 1px solid #222;
    background: linear-gradient(#e8e8e8, #d3d3d3);
    color: #111;
}

.second .sep {
    margin-right: 10px;
}

.toolbar > .round {
    width: 23px;
    height: 23px;
    margin-right: 10px;
    border: 1px solid #777;
    border-radius: 50%;
    background: linear-gradient(#fff, #d5d5d5);
}

.toolbar > .off {
    border-color: #bbb;
}

.toolbar input {
    height: 26px;
    border: 1px solid #666;
    background: #fff;
    font: 12px "Open Sans", sans-serif;
    text-align: center;
}

.page-number {
    width: 26px;
}

.page-total {
    margin: 0 8px 0 6px;
}

.toolbar > .pressed {
    height: 26px;
    margin-right: 6px;
    border: 1px solid #777;
    background: #b9b9b9;
}

.zoom {
    display: flex;
    margin-right: 10px;
}

.zoom input {
    width: 46px;
}

.zoom button {
    width: 22px;
    border: 1px solid #777;
    border-left: none;
}

.panes {
    display: flex;
    margin-left: auto;
    font: bold 14px/26px "Noto Sans", sans-serif;
    color: #4e6d9a;
}

.panes a {
    padding: 0 14px;
}

.panes a + a {
    border-left: 1px dotted #444;
}

.panes a:last-child {
    padding-right: 4px;
}

.workspace {
    flex: 1;
    display: flex;
    min-height: 0;
}

.rail {
    display: flex;
    flex-direction: column;
    align-items: center;
    gap: 19px;
    width: 46px;
    padding: 9px 8px 0 0;
    background: linear-gradient(90deg, #686868 40px, #999 40px 41px, #111 41px 42px, #555 42px);
}

.paper {
    flex: 1;
    padding: 7px 65px 0 56px;
    overflow: hidden;
    background: #fff;
    font: 14px/18px "Liberation Serif", "Times New Roman", serif;
    color: #000;
}

.paper h2 {
    font-size: 21px;
    line-height: 24px;
    text-align: center;
}

.intro {
    margin: 20px 0 13px;
    text-indent: 39px;
}

.between {
    height: 21px;
    padding-top: 2px;
    line-height: 22px;
}

.choices {
    width: 100%;
    border-collapse: collapse;
    table-layout: fixed;
    line-height: 21px;
}

.choices th,
.choices td {
    height: 30px;
    padding: 3px 4px 0;
    border: 1px solid #808080;
    text-align: center;
}

.choices th {
    height: 51px;
    font-weight: normal;
}

.choices td:nth-child(2) {
    text-align: left;
}

.choices .double td {
    height: 51px;
}

.choices .num {
    width: 75px;
}

.choices .form {
    width: 88px;
}

.choices .program {
    width: 107px;
}

.doc-scroll {
    display: flex;
    flex-direction: column;
    justify-content: space-between;
    width: 22px;
    padding-top: 8px;
    border-left: 5px solid #555;
    background: #fff;
}

.arrow {
    display: flex;
    align-items: center;
    justify-content: center;
    height: 17px;
    border: 1px solid #bbb;
    fill: none;
    stroke: #111;
    stroke-width: 2;
}

.doc-thumb {
    height: 156px;
    margin: 66px 0 auto;
    border: 1px solid #1e9fcb;
    background:
        linear-gradient(#1e9fcb, #1e9fcb) center 73px / 7px 2px no-repeat,
        linear-gradient(#1e9fcb, #1e9fcb) center 76px / 7px 2px no-repeat,
        linear-gradient(#1e9fcb, #1e9fcb) center 79px / 7px 2px no-repeat,
        #bfe6fb;
}

/* Taskbar */

.taskbar {
    display: flex;
    gap: 4px;
    height: 40px;
    background: linear-gradient(90deg, #262720, #302724 30%, #38302e 34%, #292821 55%, #26251f);
    color: #fff;
}

.task {
    width: 51px;
    height: 40px;
}

.start {
    width: 48px;
}

.view {
    width: 40px;
}

.word {
    width: 45px;
}

.open {
    justify-content: flex-start;
    gap: 4px;
    width: 152px;
    padding: 2px 0 0 7px;
    border-bottom: 2px solid #76b9ed;
    white-space: nowrap;
}

.remote.open {
    padding-left: 6px;
    gap: 2px;
}

.current.open {
    width: 160px;
    padding-left: 10px;
    gap: 2px;
    background: #5f5d55;
}

.tray {
    display: flex;
    align-items: center;
    gap: 8px;
    margin-left: auto;
    padding-right: 4px;
}

.lang {
    margin-left: 3px;
}

.clock {
    width: 64px;
    margin-left: 2px;
    line-height: 18px;
    text-align: center;
}

.notice {
    position: relative;
    width: 40px;
    padding: 12px 0 12px 5px;
    border-right: 1px solid #666;
}

.notice span {
    position: absolute;
    left: 12px;
    top: 19px;
    width: 16px;
    border: 1px solid #888;
    border-radius: 50%;
    background: #333;
    font-size: 10px;
    line-height: 14px;
    text-align: center;
}
```
